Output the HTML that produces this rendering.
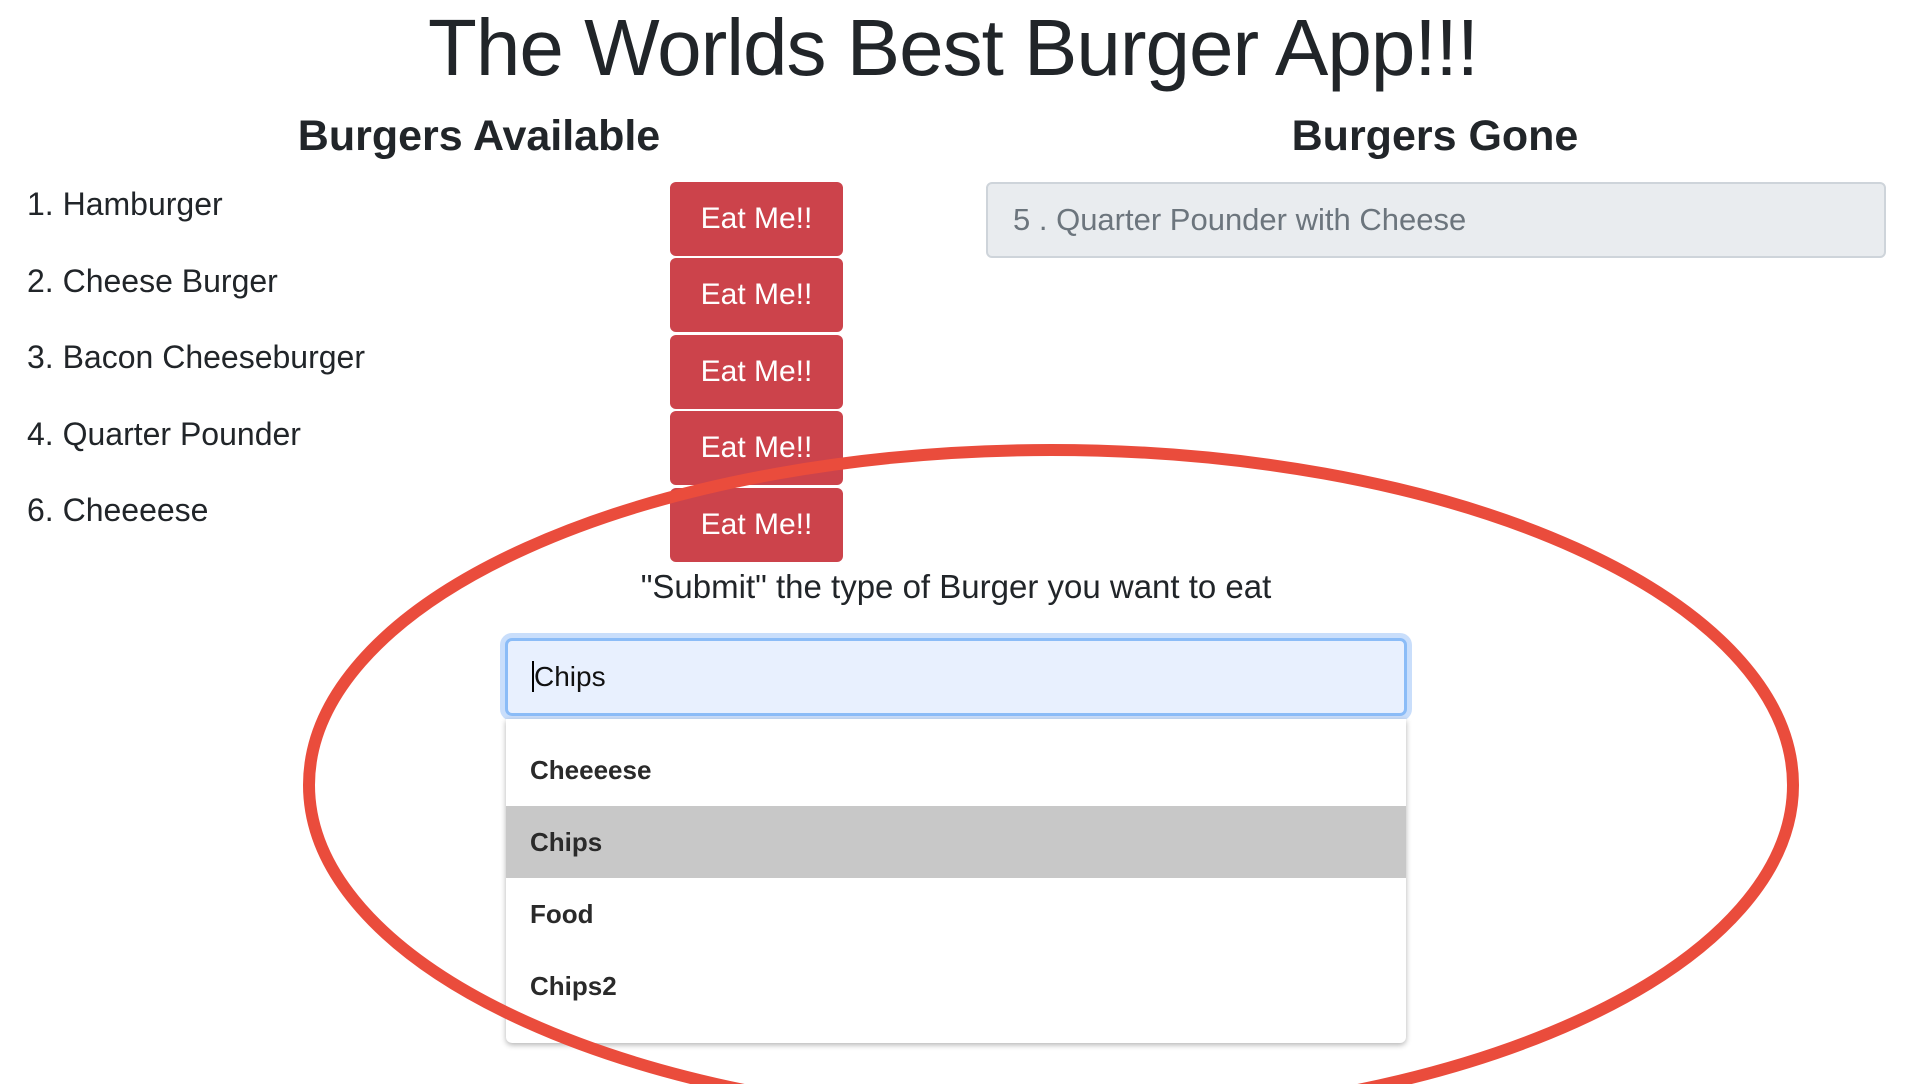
<!DOCTYPE html>
<html><head><meta charset="utf-8"><style>
body{margin:0;width:1906px;height:1084px;overflow:hidden;background:#fff;font-family:"Liberation Sans",Arial,sans-serif;color:#212529;position:relative}
.a{position:absolute;white-space:nowrap}
h1{position:absolute;left:0;width:1906px;text-align:center;top:2px;margin:0;font-size:80px;font-weight:500;letter-spacing:-1px}
h2{position:absolute;margin:0;font-size:43px;font-weight:bold;text-align:center}
.li{position:absolute;left:27px;font-size:32px}
.btn{position:absolute;left:670px;width:173px;height:74px;background:#cc434b;border-radius:6px;color:#fff;font-size:30px;line-height:74px;text-align:center}
</style></head><body>
<h1>The Worlds Best Burger App!!!</h1>
<h2 style="left:0;width:958px;top:112px">Burgers Available</h2>
<h2 style="left:985px;width:900px;top:112px">Burgers Gone</h2>
<div class="li" style="top:186px">1. Hamburger</div>
<div class="li" style="top:263px">2. Cheese Burger</div>
<div class="li" style="top:339px">3. Bacon Cheeseburger</div>
<div class="li" style="top:416px">4. Quarter Pounder</div>
<div class="li" style="top:492px">6. Cheeeese</div>
<div class="btn" style="top:182px">Eat Me!!</div>
<div class="btn" style="top:258px">Eat Me!!</div>
<div class="btn" style="top:335px">Eat Me!!</div>
<div class="btn" style="top:411px">Eat Me!!</div>
<div class="btn" style="top:488px">Eat Me!!</div>
<div class="a" style="left:986px;top:182px;background:#e9ecef;border:2px solid #ced4da;border-radius:6px;color:#6c757d;font-size:31px;line-height:72px;padding-left:25px;box-sizing:border-box;width:900px;height:76px">5 . Quarter Pounder with Cheese</div>
<div class="a" style="left:0;width:1912px;text-align:center;top:568px;font-size:33px">"Submit" the type of Burger you want to eat</div>
<div class="a" style="left:505px;top:638px;width:902px;height:78px;box-sizing:border-box;background:#e8f0fe;border:3px solid #8bbcf7;border-radius:7px;box-shadow:0 0 0 5px #c9defb;font-size:28px;line-height:72px;padding-left:24px;color:#111"><span style="border-left:2px solid #000;">Chips</span></div>
<div class="a" style="left:506px;top:719px;width:900px;height:324px;background:#fff;border-radius:0 0 6px 6px;box-shadow:0 2px 6px rgba(0,0,0,.3);font-size:26px;font-weight:bold;color:#2a2a2a">
<div style="position:absolute;top:36px;left:24px">Cheeeese</div>
<div style="position:absolute;top:87px;left:0;width:900px;height:72px;background:#c8c8c8"></div>
<div style="position:absolute;top:108px;left:24px">Chips</div>
<div style="position:absolute;top:180px;left:24px">Food</div>
<div style="position:absolute;top:252px;left:24px">Chips2</div>
</div>
<svg class="a" style="left:0;top:0" width="1906" height="1084"><ellipse cx="1051" cy="785" rx="742" ry="335" fill="none" stroke="#ea4c3c" stroke-width="12"/></svg>
</body></html>
